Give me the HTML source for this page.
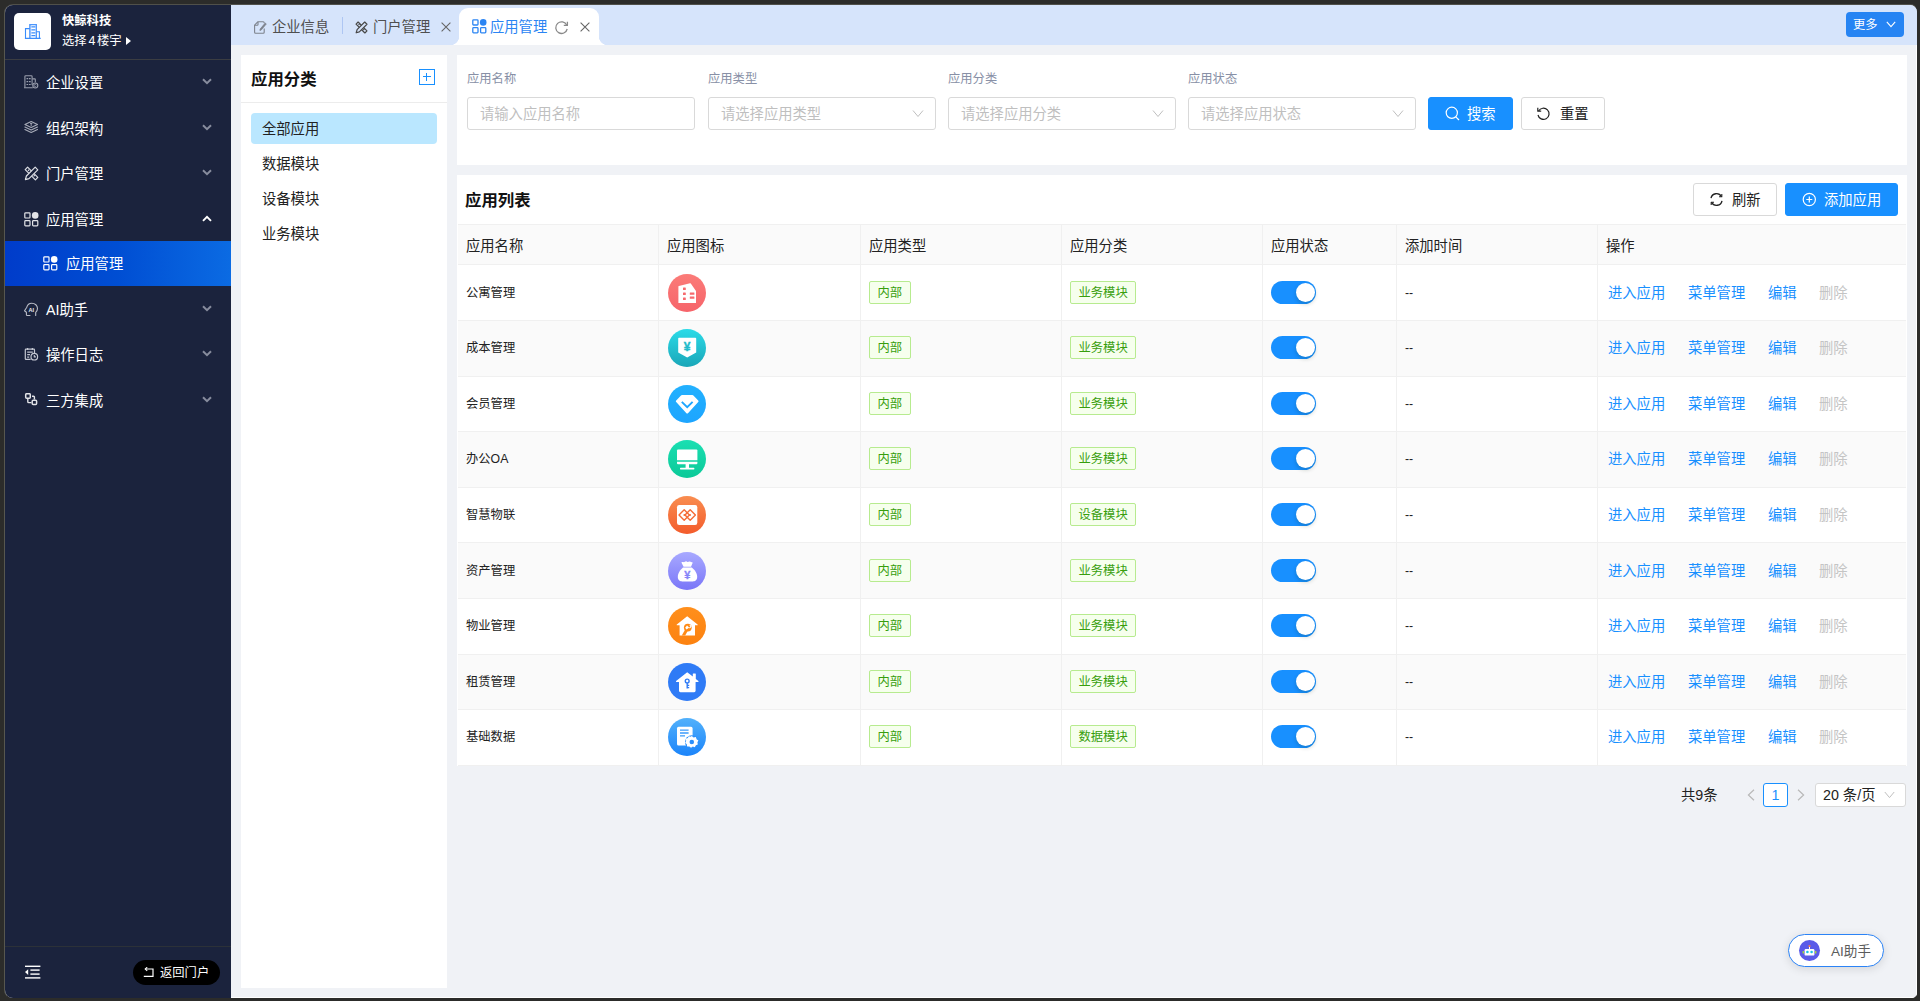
<!DOCTYPE html>
<html lang="zh-CN">
<head>
<meta charset="utf-8">
<title>应用管理</title>
<style>
*{box-sizing:border-box;margin:0;padding:0}
html,body{width:1920px;height:1001px;overflow:hidden}
body{background:#2c2c2a;font-family:"Liberation Sans","Noto Sans CJK SC",sans-serif;font-size:14.3px;color:#222;position:relative}
a{text-decoration:none;cursor:pointer}
svg{display:block}
.abs{position:absolute}
#frame{position:absolute;left:4px;top:4px;width:1914px;height:995px;border-radius:9px 8px 6px 9px;border:1px solid transparent;border-left-color:#57574f;border-top-color:#50504a}
#app{position:absolute;left:5px;top:5px;width:1912px;height:993px;border-radius:8px 7px 5px 8px;overflow:hidden;background:#f0f2f6}
#edge{position:absolute;left:226px;top:40px;width:1686px;height:953px;border-right:1px solid #fff;border-bottom:1px solid #fff;pointer-events:none}
/* sidebar */
#side{position:absolute;left:0;top:0;width:226px;height:993px;background:#1b233d;color:#fff}
#side .hd{position:absolute;left:0;top:0;width:226px;height:55px;border-bottom:1px solid #3b3d42}
#logo{position:absolute;left:9px;top:8px;width:37px;height:37px;background:#fff;border-radius:5px}
#logo svg{position:absolute;left:0;top:0}
.cn{position:absolute;left:57px;top:8px;font-size:12.3px;font-weight:bold;line-height:16px;white-space:nowrap}
.bd{position:absolute;left:57px;top:28px;font-size:12.3px;line-height:16px;white-space:nowrap;word-spacing:-1.6px}
.bd i{display:inline-block;width:0;height:0;border-left:5.8px solid #fff;border-top:4.4px solid transparent;border-bottom:4.4px solid transparent;margin-left:4.200px;vertical-align:0.500px}
.mi{position:absolute;left:0;width:226px;height:40px;line-height:40px;font-size:14.3px;color:#fff;white-space:nowrap}
.mi .ic{position:absolute;left:19px;top:13px;width:14px;height:14px;color:#a9adb9}
.mi .tx{position:absolute;left:41px;top:1px}
.mi .ar{position:absolute;left:197px;top:16px;width:10px;height:7px}
.mi.sub{height:45px;line-height:45px;background:linear-gradient(90deg,#003cca 0%,#004ed3 50%,#0b6be3 100%)}
.mi.sub .ic{left:38px;top:15px;color:#fff}
.mi.sub .tx{left:61px}
#side .ft{position:absolute;left:0;top:941px;width:226px;height:52px;border-top:1px solid #2c3138}
#side .ft .col{position:absolute;left:20px;top:18px}
#side .ft .back{position:absolute;left:128px;top:13px;width:87px;height:25px;border-radius:13px;background:#000;color:#fff;font-size:12.3px;line-height:27px;white-space:nowrap}
#side .ft .back svg{position:absolute;left:10px;top:7px}
#side .ft .back span{position:absolute;left:27px;top:0}
/* tabs */
#tabs{position:absolute;left:226px;top:0;width:1686px;height:40px;background:#d6e4fb}
.tab{position:absolute;top:0;height:40px;line-height:44px;font-size:14.3px;color:#4f4f4f;white-space:nowrap}
.tab svg{position:absolute;margin-top:1px}
#tabs .sep{position:absolute;left:111px;top:12px;width:1px;height:17px;background:#aec6f3}
#tabs .act{position:absolute;left:228px;top:3px;width:140px;height:37px;background:#fff;border-radius:9px 9px 0 0}
#tabs .act:before,#tabs .act:after{content:"";position:absolute;bottom:0;width:9px;height:9px}
#tabs .act:before{left:-9px;background:radial-gradient(circle at 0 0,transparent 9px,#fff 9.5px)}
#tabs .act:after{right:-9px;background:radial-gradient(circle at 100% 0,transparent 9px,#fff 9.5px)}
#more{position:absolute;left:1615px;top:7px;width:58px;height:25px;border-radius:4px;background:#2684f3;color:#fff;font-size:12.3px;line-height:27px}
#more span{position:absolute;left:7px;top:0}
#more svg{position:absolute;left:40px;top:9px}
/* left panel */
#cat{position:absolute;left:236px;top:50px;width:206px;height:933px;background:#fff}
#cat .tt{position:absolute;left:10px;top:12px;font-size:16.4px;font-weight:bold;line-height:24px;color:#111}
#cat .plus{position:absolute;left:178px;top:14px;width:16px;height:16px;border:1.5px solid #1890ff}
#cat .plus:before{content:"";position:absolute;left:2.5px;top:5.75px;width:8px;height:1.5px;background:#1890ff}
#cat .plus:after{content:"";position:absolute;left:5.75px;top:2.5px;width:1.5px;height:8px;background:#1890ff}
#cat .ln{position:absolute;left:0;top:47px;width:206px;height:1px;background:#ececec}
#cat .it{position:absolute;left:10px;width:186px;height:31px;line-height:33px;padding-left:11px;font-size:14.3px;color:#222;border-radius:4px}
#cat .it.on{background:#bae7ff}
/* search */
#search{position:absolute;left:452px;top:50px;width:1450px;height:110px;background:#fff}
#search label{position:absolute;top:16px;font-size:12.3px;line-height:16px;color:#8890a6}
.inp{position:absolute;top:42px;width:228px;height:33px;border:1px solid #d9d9d9;border-radius:3px;background:#fff;font-size:14.3px;line-height:33px;color:#bfbfbf;padding-left:12px;white-space:nowrap}
.inp svg{position:absolute;right:11px;top:11px}
.btn{position:absolute;height:33px;border-radius:3px;font-size:14.3px;line-height:33px;white-space:nowrap}
.btn.pri{background:#1890ff;color:#fff;border:1px solid #1890ff}
.btn.def{background:#fff;color:#222;border:1px solid #d9d9d9}
.btn svg{position:absolute}
.btn span{position:absolute;top:0}
/* table */
#list{position:absolute;left:452px;top:170px;width:1450px;height:591px;background:#fff}
#list .tt{position:absolute;left:8px;top:13px;font-size:16.4px;font-weight:bold;line-height:24px;color:#111}
.th{position:absolute;left:1px;top:49px;width:1448px;height:41px;background:#fafafa;border-top:1px solid #f0f0f0;border-bottom:1px solid #f0f0f0}
.th div{position:absolute;top:0;height:39px;line-height:43px;font-size:14.3px;color:#222;padding-left:8px;border-right:1px solid #f0f0f0}
.tr{position:absolute;left:1px;width:1448px;border-bottom:1px solid #f0f0f0;background:#fff}
.tr.odd{background:#fafafa}
.td{position:absolute;top:0;height:100%;border-right:1px solid #f0f0f0}
.c1{left:0;width:201px}.c2{left:201px;width:202px}.c3{left:403px;width:201px}.c4{left:604px;width:201px}.c5{left:805px;width:134px}.c6{left:939px;width:201px}.c7{left:1140px;width:308px;border-right:0!important}
.nm{position:absolute;left:8px;top:var(--c);margin-top:-10px;font-size:12.3px;line-height:20px;color:#222;white-space:nowrap}
.appic{position:absolute;left:9px;top:var(--c);margin-top:-19px;width:38px;height:38px;border-radius:50%;overflow:hidden}
.tag{position:absolute;left:8px;top:var(--c);margin-top:-12px;height:23px;line-height:22px;padding:0 7.5px;font-size:12.3px;color:#389e0d;background:#f6ffed;border:1px solid #b7eb8f;border-radius:2px;white-space:nowrap}
.sw{position:absolute;left:8px;top:var(--c);margin-top:-12px;width:45px;height:23px;border-radius:12px;background:#1890ff}
.sw i{position:absolute;left:24.500px;top:2px;width:19px;height:19px;border-radius:50%;background:#fff;box-shadow:0 2px 4px rgba(0,35,11,.2)}
.td a{position:absolute;top:var(--c);margin-top:-10px;font-size:14.3px;line-height:20px;color:#1890ff;white-space:nowrap}
.td a.dis{color:#c4c4c4}
.a1{left:10px}.a2{left:90px}.a3{left:170px}.a4{left:221px}
/* pagination */
#pg{position:absolute;left:0;top:0;font-size:14.3px;color:#222}
#pg .tot{position:absolute;left:1676px;top:778px;line-height:24px;white-space:nowrap}
#pg .p1{position:absolute;left:1758px;top:778px;width:25px;height:24px;border:1px solid #1890ff;border-radius:3px;background:#fff;color:#1890ff;text-align:center;line-height:23px}
#pg .sel{position:absolute;left:1810px;top:778px;width:91px;height:24px;border:1px solid #d9d9d9;border-radius:3px;background:#fff;line-height:22px;padding-left:7px;white-space:nowrap}
#pg svg{position:absolute}
/* ai float */
#ai{position:absolute;left:1783px;top:929px;width:96px;height:33px;border-radius:17px;border:1px solid #2b83f6;background:#fff;box-shadow:0 2px 10px rgba(0,0,0,.12);font-size:13.6px;color:#5c5c5c;line-height:33px}
#ai .rb{position:absolute;left:10px;top:5px;width:21px;height:21px;border-radius:50%;background:#5b5be8;overflow:hidden}
#ai span{position:absolute;left:42px;top:0;white-space:nowrap}
.i1{background:linear-gradient(180deg,#fb7b78,#f6646a)}
.i2{background:linear-gradient(180deg,#2bdbe8,#1aa6b8)}
.i3{background:linear-gradient(180deg,#22b1ff,#1da5ff)}
.i4{background:linear-gradient(180deg,#1adfb2,#0bc998)}
.i5{background:linear-gradient(180deg,#f98d50,#f35c2c)}
.i6{background:linear-gradient(180deg,#a8a9ff,#7a76f8)}
.i7{background:linear-gradient(180deg,#ff8f1c,#fc8210)}
.i8{background:#2f7bf6}
.i9{background:linear-gradient(180deg,#52b1fb,#1b84fa)}

</style>
</head>
<body>
<div id="frame"></div>
<div id="app">
<div id="side">
  <div class="hd">
    <div id="logo"><svg width="37" height="37" viewBox="0 0 37 37" fill="none" stroke="#3b8dfc" stroke-width="1.1"><rect x="15.200" y="11.200" width="2" height="14" fill="#b5d3fe" stroke="none"/><rect x="21.300" y="11.200" width="1.600" height="14" fill="#c5dcfe" stroke="none"/><path d="M15.800 25.300V11.600h6.600v13.700" stroke="#4d97fc"/><path d="M17.400 13.900h4M17.400 16.800h4M17.400 19.800h4M17.400 22.700h4" stroke-width="1.200"/><path d="M11.500 25.300V15.600h4.300M22.400 18.700h3v6.600"/><path d="M10.900 25.400h15.800" stroke-width="1.300"/></svg></div>
    <div class="cn">快鲸科技</div>
    <div class="bd">选择 4 楼宇<i></i></div>
  </div>
  <div class="mi" style="top:57px"><span class="ic" style="color:#9a9fae"><svg width="15" height="15" viewBox="0 0 15 15" fill="none" stroke="currentColor" stroke-width="1.100"><path d="M.9 12.600V1.500a.8.800 0 0 1 .8-.8h5.600a.8.800 0 0 1 .8.800v8.500"/><path d="M2.500 3.700h1.700M5 3.700h1.700M2.500 6.600h1.700M5 6.600h1.700M2.500 9.500h1.700M5 9.500h1.700" stroke-width="1.200"/><path d="M0 12.700h8.800"/><path d="M8.300 3.900h2.400a.6.600 0 0 1 .6.600v2.700"/><circle cx="11.300" cy="10.500" r="2.500"/><path d="M12.200 9.900a1.100 1.100 0 1 0 0 1.200" stroke-width=".9"/></svg></span><span class="tx">企业设置</span><svg class="ar" viewBox="0 0 10 7" fill="none" stroke="#878c9d" stroke-width="2"><path d="M1 1.2 5 5.2 9 1.2"/></svg></div>
  <div class="mi" style="top:103px"><span class="ic" style="color:#a6aab7"><svg width="15" height="15" viewBox="0 0 15 15" fill="none" stroke="currentColor" stroke-width="1.100" stroke-linejoin="round" stroke-linecap="round"><path d="M7.200.5 13.500 3.500 7.200 6.500.9 3.500Z"/><path d="M.9 6 7.200 9 13.500 6"/><path d="M.9 8.500 7.200 11.500 13.500 8.500"/><path d="M7.200 2.400v2.200M6.400 2.600h1.600" stroke-width=".9"/></svg></span><span class="tx">组织架构</span><svg class="ar" viewBox="0 0 10 7" fill="none" stroke="#878c9d" stroke-width="2"><path d="M1 1.2 5 5.2 9 1.2"/></svg></div>
  <div class="mi" style="top:148px"><span class="ic" style="color:#dcdee4"><svg width="15" height="15" viewBox="0 0 15 15" fill="none" stroke="currentColor" stroke-width="1.2" stroke-linejoin="round"><path d="M1.2 3.6 3.6 1.2 13.8 11.4 11.4 13.8Z"/><path d="M11.2 1.2 13.8 3.8 5 12.6 1.4 13.6 2.4 10Z" fill="#1b233d"/><path d="M4 4.8 5.2 3.6M9.6 10.4l1.2-1.2"/></svg></span><span class="tx">门户管理</span><svg class="ar" viewBox="0 0 10 7" fill="none" stroke="#878c9d" stroke-width="2"><path d="M1 1.2 5 5.2 9 1.2"/></svg></div>
  <div class="mi" style="top:194px"><span class="ic" style="color:#e3e4e8"><svg width="15" height="15" viewBox="0 0 15 15" fill="none" stroke="currentColor" stroke-width="1.2"><rect x=".8" y=".8" width="5.2" height="5.2" rx=".8"/><rect x=".8" y="8.6" width="5.2" height="5.2" rx=".8"/><rect x="8.6" y="8.6" width="5.2" height="5.2" rx=".8"/><circle cx="11.2" cy="3.4" r="3.3" fill="currentColor" stroke="none"/></svg></span><span class="tx">应用管理</span><svg class="ar" viewBox="0 0 10 7" fill="none" stroke="#ffffff" stroke-width="1.9"><path d="M1 5.8 5 1.8 9 5.8"/></svg></div>
  <div class="mi sub" style="top:236px"><span class="ic"><svg width="15" height="15" viewBox="0 0 15 15" fill="none" stroke="currentColor" stroke-width="1.2"><rect x=".8" y=".8" width="5.2" height="5.2" rx=".8"/><rect x=".8" y="8.6" width="5.2" height="5.2" rx=".8"/><rect x="8.6" y="8.6" width="5.2" height="5.2" rx=".8"/><circle cx="11.2" cy="3.4" r="3.3" fill="currentColor" stroke="none"/></svg></span><span class="tx">应用管理</span></div>
  <div class="mi" style="top:284px"><span class="ic" style="color:#b9bcc7"><svg width="15" height="15" viewBox="0 0 15 15" fill="none" stroke="currentColor" stroke-width="1.100" stroke-linejoin="round" stroke-linecap="round"><path d="M6 13.500H3.200a.8.800 0 0 1-.8-.8V10.200L.5 8.700 2.800 5.200C3.400 2.800 5.200 1.200 7.800 1.200 11 1.200 13.500 3.500 13.500 6.500c0 1.600-.7 2.800-1.800 3.800v3.200"/><text x="4.400" y="9.700" font-family="Liberation Sans,sans-serif" font-size="5.600" font-weight="bold" fill="#e8e9ee" stroke="none">AI</text></svg></span><span class="tx">AI助手</span><svg class="ar" viewBox="0 0 10 7" fill="none" stroke="#878c9d" stroke-width="2"><path d="M1 1.2 5 5.2 9 1.2"/></svg></div>
  <div class="mi" style="top:329px"><span class="ic" style="color:#c3c6d1"><svg width="15" height="15" viewBox="0 0 15 15" fill="none" stroke="currentColor" stroke-width="1.200"><path d="M6.600 12.400H2a.7.700 0 0 1-.7-.7V2.900a.7.700 0 0 1 .7-.7h7.800a.7.700 0 0 1 .7.700v3"/><path d="M3.600.9v2M8.400.9v2" stroke-width="1.300"/><path d="M3.200 5.100h5.600M3.200 7.700h2.800M3.200 10.100h2" /><circle cx="10.300" cy="9.700" r="3.300"/><path d="M10.300 7.900v2h1.600" stroke-width="1.100"/></svg></span><span class="tx">操作日志</span><svg class="ar" viewBox="0 0 10 7" fill="none" stroke="#878c9d" stroke-width="2"><path d="M1 1.200 5 5.200 9 1.200"/></svg></div>
  <div class="mi" style="top:375px"><span class="ic" style="color:#e2e3e8"><svg width="15" height="15" viewBox="0 0 15 15" fill="none" stroke="currentColor" stroke-width="1.500"><rect x="1.700" y=".7" width="4.600" height="4.600" rx="1"/><rect x="8.200" y="7.200" width="4.400" height="4.400" rx="1"/><path d="M3.800 6v2.800a.8.800 0 0 0 .8.800H7.400M10.400 6.500V4a.8.800 0 0 0-.8-.8H8" stroke-width="1.400"/></svg></span><span class="tx">三方集成</span><svg class="ar" viewBox="0 0 10 7" fill="none" stroke="#878c9d" stroke-width="2"><path d="M1 1.200 5 5.200 9 1.200"/></svg></div>
  <div class="ft">
    <svg class="col" width="16" height="14" viewBox="0 0 16 14" fill="#fff"><rect x="0" y=".6" width="15.400" height="1.400"/><rect x="5.400" y="4.400" width="9.200" height="1.400"/><rect x="5.400" y="8.400" width="9.200" height="1.400"/><rect x="0" y="12.200" width="15.400" height="1.400"/><path d="M0 7.100 3.200 4.300v5.600Z"/></svg>
    <div class="back"><svg width="12" height="11" viewBox="0 0 12 11" fill="none" stroke="#fff" stroke-width="1.200"><path d="M2.400 2H10v7.400H.8"/><path d="M4.200.2 2.200 2l2 1.800" stroke-width="1.100"/></svg><span>返回门户</span></div>
  </div>
</div>
<div id="tabs">
  <div class="tab" style="left:0;width:111px"><svg style="left:23px;top:15px" width="13" height="13" viewBox="0 0 13 13" fill="none" stroke="#7d828c" stroke-width="1.100" stroke-linejoin="round"><path d="M10.200 7.400v3.800a1 1 0 0 1-1 1H1.600a1 1 0 0 1-1-1V4.200L4 .700h5.200a1 1 0 0 1 1 1V2.200"/><path d="M4 .900V3.400a.8.800 0 0 1-.8.800H.8"/><path d="M12.300 2.900 7.200 9.100 5.900 9.500l.2-1.400L11.200 2Z" fill="#7d828c" stroke-width=".7"/></svg><span style="position:absolute;left:41px">企业信息</span></div>
  <div class="sep"></div>
  <div class="tab" style="left:112px;width:116px"><svg style="left:12px;top:15px" width="13" height="13" viewBox="0 0 15 15" fill="none" stroke="#4a4a4a" stroke-width="1.400" stroke-linejoin="round"><path d="M1.200 3.600 3.600 1.200 13.800 11.400 11.400 13.800Z"/><path d="M11.200 1.200 13.800 3.800 5 12.600 1.400 13.600 2.400 10Z" fill="#d6e4fb"/><path d="M4 4.800 5.200 3.600M9.600 10.400l1.200-1.200"/></svg><span style="position:absolute;left:30px">门户管理</span><svg style="left:98px;top:16px" width="10" height="10" viewBox="0 0 10 10" fill="none" stroke="#666" stroke-width="1.100"><path d="M.6.600 9.400 9.400M9.400.600.6 9.400"/></svg></div>
  <div class="act"></div>
  <div class="tab" style="left:228px;width:140px;color:#2b85f3"><svg style="left:13px;top:13px" width="15" height="15" viewBox="0 0 15 15" fill="none" stroke="#2b85f3" stroke-width="1.300"><rect x=".8" y=".8" width="5.200" height="5.200" rx=".8"/><rect x=".8" y="8.600" width="5.200" height="5.200" rx=".8"/><rect x="8.600" y="8.600" width="5.200" height="5.200" rx=".8"/><circle cx="11.200" cy="3.400" r="3.300" fill="#2b85f3" stroke="none"/></svg><span style="position:absolute;left:31px">应用管理</span><svg style="left:95px;top:14px" width="15" height="15" viewBox="0 0 15 15" fill="none" stroke="#8a8a8a" stroke-width="1.300"><path d="M12.800 5.200A5.800 5.800 0 1 0 13.200 9"/><path d="M13.400 1.800v3.600H9.800" stroke-linejoin="round"/></svg><svg style="left:121px;top:16px" width="10" height="10" viewBox="0 0 10 10" fill="none" stroke="#666" stroke-width="1.100"><path d="M.6.600 9.400 9.400M9.400.600.6 9.400"/></svg></div>
  <div id="more"><span>更多</span><svg width="10" height="7" viewBox="0 0 10 7" fill="none" stroke="#fff" stroke-width="1.100"><path d="M.8.800 5 5.600 9.200.800"/></svg></div>
</div>
<div id="cat">
  <div class="tt">应用分类</div>
  <div class="plus"></div>
  <div class="ln"></div>
  <div class="it on" style="top:58px">全部应用</div>
  <div class="it" style="top:93px">数据模块</div>
  <div class="it" style="top:128px">设备模块</div>
  <div class="it" style="top:163px">业务模块</div>
</div>
<div id="search">
  <label style="left:10px">应用名称</label>
  <label style="left:251px">应用类型</label>
  <label style="left:491px">应用分类</label>
  <label style="left:731px">应用状态</label>
  <div class="inp" style="left:10px">请输入应用名称</div>
  <div class="inp" style="left:251px">请选择应用类型<svg width="12" height="9" viewBox="0 0 12 9" fill="none" stroke="#bfbfbf" stroke-width="1"><path d="M1 1.500 6 7.500 11 1.500"/></svg></div>
  <div class="inp" style="left:491px">请选择应用分类<svg width="12" height="9" viewBox="0 0 12 9" fill="none" stroke="#bfbfbf" stroke-width="1"><path d="M1 1.500 6 7.500 11 1.500"/></svg></div>
  <div class="inp" style="left:731px">请选择应用状态<svg width="12" height="9" viewBox="0 0 12 9" fill="none" stroke="#bfbfbf" stroke-width="1"><path d="M1 1.500 6 7.500 11 1.500"/></svg></div>
  <div class="btn pri" style="left:971px;top:42px;width:85px"><svg style="left:16px;top:8px" width="15" height="15" viewBox="0 0 15 15" fill="none" stroke="#fff" stroke-width="1.200"><circle cx="6.800" cy="6.800" r="5.600"/><path d="M10.800 10.800 14 14"/></svg><span style="left:38px">搜索</span></div>
  <div class="btn def" style="left:1064px;top:42px;width:84px"><svg style="left:14px;top:8px" width="15" height="15" viewBox="0 0 15 15" fill="none" stroke="#222" stroke-width="1.200"><path d="M2.600 5A5.600 5.600 0 1 1 2 9"/><path d="M1.800 1.800v3.400h3.400" stroke-linejoin="round"/></svg><span style="left:38px">重置</span></div>
</div>
<div id="list">
  <div class="tt">应用列表</div>
  <div class="btn def" style="left:1236px;top:8px;width:84px"><svg style="left:15px;top:8px" width="15" height="15" viewBox="0 0 15 15" fill="none" stroke="#222" stroke-width="1.300"><path d="M2 6.200A5.600 5.600 0 0 1 12.400 4.600M13 8.800A5.600 5.600 0 0 1 2.600 10.400"/><path d="M12.800 2v2.800H10M2.200 13v-2.800H5" stroke-linejoin="round" stroke-width="1.100"/></svg><span style="left:38px">刷新</span></div>
  <div class="btn pri" style="left:1328px;top:8px;width:113px"><svg style="left:16px;top:8px" width="15" height="15" viewBox="0 0 15 15" fill="none" stroke="#fff" stroke-width="1.200"><circle cx="7.300" cy="7.500" r="6.100"/><path d="M7.300 4.500v6M4.300 7.500h6"/></svg><span style="left:38px">添加应用</span></div>
  <div class="th"><div style="left:0;width:201px">应用名称</div><div style="left:201px;width:202px">应用图标</div><div style="left:403px;width:201px">应用类型</div><div style="left:604px;width:201px">应用分类</div><div style="left:805px;width:134px">应用状态</div><div style="left:939px;width:201px">添加时间</div><div style="left:1140px;width:308px;border-right:0">操作</div></div>
<div class="tr" style="top:90px;height:56px;--c:28px"><div class="td c1"><span class="nm">公寓管理</span></div><div class="td c2"><span class="appic i1"><svg width="38" height="38" viewBox="0 0 38 38"><path d="M10.400 29V12.600a.6.600 0 0 1 .5-.6L22 9.300a.7.700 0 0 1 .8.300L28 17v12Z" fill="#fff"/><g fill="#f66a6e"><rect x="15" y="13.600" width="2.800" height="2.500" rx=".4"/><rect x="15" y="18.600" width="2.800" height="2.500" rx=".4"/><rect x="15" y="23.600" width="2.800" height="2.500" rx=".4"/><rect x="21.800" y="18.400" width="4.600" height="2.400" rx=".4"/><rect x="21.800" y="22.400" width="4.600" height="2.400" rx=".4"/></g></svg></span></div><div class="td c3"><span class="tag">内部</span></div><div class="td c4"><span class="tag">业务模块</span></div><div class="td c5"><span class="sw"><i></i></span></div><div class="td c6"><span class="nm">--</span></div><div class="td c7"><a class="a1">进入应用</a><a class="a2">菜单管理</a><a class="a3">编辑</a><a class="a4 dis">删除</a></div></div>
<div class="tr odd" style="top:146px;height:56px;--c:27px"><div class="td c1"><span class="nm">成本管理</span></div><div class="td c2"><span class="appic i2"><svg width="38" height="38" viewBox="0 0 38 38"><path d="M10.200 9.600a.8.800 0 0 1 .8-.8h16.400a.8.800 0 0 1 .8.800V23.600L19.200 28.600 10.200 23.600Z" fill="#fff"/><text x="19.200" y="22.400" text-anchor="middle" font-family="Liberation Sans,sans-serif" font-size="12" font-weight="bold" fill="#22bccb" stroke="#22bccb" stroke-width=".4">¥</text></svg></span></div><div class="td c3"><span class="tag">内部</span></div><div class="td c4"><span class="tag">业务模块</span></div><div class="td c5"><span class="sw"><i></i></span></div><div class="td c6"><span class="nm">--</span></div><div class="td c7"><a class="a1">进入应用</a><a class="a2">菜单管理</a><a class="a3">编辑</a><a class="a4 dis">删除</a></div></div>
<div class="tr" style="top:202px;height:55px;--c:27px"><div class="td c1"><span class="nm">会员管理</span></div><div class="td c2"><span class="appic i3"><svg width="38" height="38" viewBox="0 0 38 38"><path d="M14 10h10.400a1.400 1.400 0 0 1 1 .4l4.800 5a1.200 1.200 0 0 1 0 1.700L20.200 28a1.300 1.300 0 0 1-2 0L8.200 17.100a1.200 1.200 0 0 1 0-1.700l4.800-5a1.400 1.400 0 0 1 1-.4Z" fill="#fff"/><path d="M13.800 16.800 19.200 22.200 24.600 16.800" fill="none" stroke="#1ea6ff" stroke-width="1.900"/></svg></span></div><div class="td c3"><span class="tag">内部</span></div><div class="td c4"><span class="tag">业务模块</span></div><div class="td c5"><span class="sw"><i></i></span></div><div class="td c6"><span class="nm">--</span></div><div class="td c7"><a class="a1">进入应用</a><a class="a2">菜单管理</a><a class="a3">编辑</a><a class="a4 dis">删除</a></div></div>
<div class="tr odd" style="top:257px;height:56px;--c:27px"><div class="td c1"><span class="nm">办公OA</span></div><div class="td c2"><span class="appic i4"><svg width="38" height="38" viewBox="0 0 38 38" fill="#fff"><path d="M9 10.600a1 1 0 0 1 1-1h18.400a1 1 0 0 1 1 1V20.200H9Z"/><path d="M9 21.800H29.400v1.400a1 1 0 0 1-1 1H10a1 1 0 0 1-1-1Z"/><rect x="17.600" y="24" width="3.400" height="4"/><rect x="12" y="27.800" width="14.400" height="1.600" rx=".6"/></svg></span></div><div class="td c3"><span class="tag">内部</span></div><div class="td c4"><span class="tag">业务模块</span></div><div class="td c5"><span class="sw"><i></i></span></div><div class="td c6"><span class="nm">--</span></div><div class="td c7"><a class="a1">进入应用</a><a class="a2">菜单管理</a><a class="a3">编辑</a><a class="a4 dis">删除</a></div></div>
<div class="tr" style="top:313px;height:55px;--c:27px"><div class="td c1"><span class="nm">智慧物联</span></div><div class="td c2"><span class="appic i5"><svg width="38" height="38" viewBox="0 0 38 38"><rect x="9" y="9.100" width="20.300" height="19.800" rx="2.200" fill="#fff"/><g fill="none" stroke="#f56b36" stroke-width="1.400" stroke-linejoin="round"><path d="M16.200 13.800 21.400 19 16.200 24.200 11 19Z"/><path d="M22.200 13.800 27.400 19 22.200 24.200 17 19Z"/></g><circle cx="16.400" cy="19" r="1" fill="#f56b36"/><circle cx="22" cy="19" r="1" fill="#f56b36"/></svg></span></div><div class="td c3"><span class="tag">内部</span></div><div class="td c4"><span class="tag">设备模块</span></div><div class="td c5"><span class="sw"><i></i></span></div><div class="td c6"><span class="nm">--</span></div><div class="td c7"><a class="a1">进入应用</a><a class="a2">菜单管理</a><a class="a3">编辑</a><a class="a4 dis">删除</a></div></div>
<div class="tr odd" style="top:368px;height:56px;--c:28px"><div class="td c1"><span class="nm">资产管理</span></div><div class="td c2"><span class="appic i6"><svg width="38" height="38" viewBox="0 0 38 38"><path d="M13.400 10.600c1.200-1.400 2.400.2 3.400-.8 1-1 1.800-.6 2.400 0 .8.800 1.800-.8 3.200 0 1 .6 2 .6 2.400.8L23 14.800H15.600Z" fill="#fff"/><path d="M15 15.600h8.800c3 2.200 5.400 6 5.400 9.400 0 3.200-2.200 4.400-4.400 4.400H14.200c-2.200 0-4.400-1.200-4.400-4.400 0-3.400 2.400-7.200 5.200-9.400Z" fill="#fff"/><text x="19.400" y="27.400" text-anchor="middle" font-family="Liberation Sans,sans-serif" font-size="11" font-weight="bold" fill="#8684f9" stroke="#8684f9" stroke-width=".3">¥</text></svg></span></div><div class="td c3"><span class="tag">内部</span></div><div class="td c4"><span class="tag">业务模块</span></div><div class="td c5"><span class="sw"><i></i></span></div><div class="td c6"><span class="nm">--</span></div><div class="td c7"><a class="a1">进入应用</a><a class="a2">菜单管理</a><a class="a3">编辑</a><a class="a4 dis">删除</a></div></div>
<div class="tr" style="top:424px;height:56px;--c:27px"><div class="td c1"><span class="nm">物业管理</span></div><div class="td c2"><span class="appic i7"><svg width="38" height="38" viewBox="0 0 38 38"><path d="M19.200 9.200 29.600 17.600a.4.400 0 0 1-.2.700H27V28.400H11.600V18.300H9a.4.400 0 0 1-.2-.7Z" fill="#fff"/><circle cx="19.800" cy="20.600" r="3.900" fill="#ff8a14"/><path d="M17.200 22.600 13.800 28.600h3.400l2.600-4.800Z" fill="#ff8a14"/><path d="M19 18.400 21.200 20.600 18.600 22.600 17.200 20.800Z" fill="#fff"/><path d="M21.800 17.800 23 19.600 21.400 21.200" fill="none" stroke="#fff" stroke-width="1.100"/></svg></span></div><div class="td c3"><span class="tag">内部</span></div><div class="td c4"><span class="tag">业务模块</span></div><div class="td c5"><span class="sw"><i></i></span></div><div class="td c6"><span class="nm">--</span></div><div class="td c7"><a class="a1">进入应用</a><a class="a2">菜单管理</a><a class="a3">编辑</a><a class="a4 dis">删除</a></div></div>
<div class="tr odd" style="top:480px;height:55px;--c:27px"><div class="td c1"><span class="nm">租赁管理</span></div><div class="td c2"><span class="appic i8"><svg width="38" height="38" viewBox="0 0 38 38"><path d="M19.200 9.200 24.800 13.600V11a.5.500 0 0 1 .5-.5h2a.5.500 0 0 1 .5.500v5l2.600 2a.5.500 0 0 1-.3.900H27.600V27.800a1.400 1.400 0 0 1-1.400 1.400H12.400A1.400 1.400 0 0 1 11 27.800V18.900H8.400a.5.500 0 0 1-.3-.9Z" fill="#fff"/><circle cx="19.200" cy="18" r="1.900" fill="none" stroke="#2f7bf6" stroke-width="1.400"/><path d="M19.200 20v5.400M19.200 22.400h2M19.200 24.600h2" fill="none" stroke="#2f7bf6" stroke-width="1.400"/></svg></span></div><div class="td c3"><span class="tag">内部</span></div><div class="td c4"><span class="tag">业务模块</span></div><div class="td c5"><span class="sw"><i></i></span></div><div class="td c6"><span class="nm">--</span></div><div class="td c7"><a class="a1">进入应用</a><a class="a2">菜单管理</a><a class="a3">编辑</a><a class="a4 dis">删除</a></div></div>
<div class="tr" style="top:535px;height:56px;--c:27px"><div class="td c1"><span class="nm">基础数据</span></div><div class="td c2"><span class="appic i9"><svg width="38" height="38" viewBox="0 0 38 38"><rect x="9" y="8.800" width="15.600" height="18.800" rx="1.600" fill="#fff"/><path d="M12 12.200h8.600M12 15h8.600M12 17.800h5" stroke="#3b9bfb" stroke-width="1.300" fill="none"/><circle cx="23.800" cy="24" r="6.800" fill="#2d90fb"/><path d="M23.800 17.900 25.600 19.400 27.900 19 28.600 21.200 30.400 22.600 29.400 24.200 29.800 26.400 27.900 27.200 26.800 29.200 24.800 28.600 23 29.800 21.400 28.400 19.200 28.400 18.800 26.200 17.200 24.800 18.200 23 17.800 20.800 19.800 20 20.800 18.200 22.600 18.800Z" fill="#fff"/><circle cx="23.800" cy="24" r="2.300" fill="#2d90fb"/></svg></span></div><div class="td c3"><span class="tag">内部</span></div><div class="td c4"><span class="tag">数据模块</span></div><div class="td c5"><span class="sw"><i></i></span></div><div class="td c6"><span class="nm">--</span></div><div class="td c7"><a class="a1">进入应用</a><a class="a2">菜单管理</a><a class="a3">编辑</a><a class="a4 dis">删除</a></div></div>
</div>
<div id="pg">
  <div class="tot">共9条</div>
  <svg style="left:1742px;top:784px" width="8" height="12" viewBox="0 0 8 12" fill="none" stroke="#b8b8b8" stroke-width="1.2"><path d="M7 .8 1.400 6 7 11.200"/></svg>
  <div class="p1">1</div>
  <svg style="left:1792px;top:784px" width="8" height="12" viewBox="0 0 8 12" fill="none" stroke="#b8b8b8" stroke-width="1.2"><path d="M1 .8 6.600 6 1 11.200"/></svg>
  <div class="sel">20 条/页<svg style="right:10px;top:7px" width="11" height="8" viewBox="0 0 11 8" fill="none" stroke="#bfbfbf" stroke-width="1"><path d="M.8 1 5.500 6.600 10.200 1"/></svg></div>
</div>
<div id="edge"></div>
<div id="ai"><div class="rb"><svg width="21" height="21" viewBox="0 0 21 21"><rect x="5.600" y="9" width="9.800" height="6.600" rx="1.200" fill="#fff"/><rect x="10" y="6.600" width="1" height="2.600" fill="#fff"/><circle cx="10.500" cy="6" r="1.100" fill="#ff7a45"/><circle cx="8.400" cy="12" r="1.300" fill="#19c2e8"/><circle cx="12.600" cy="12" r="1.300" fill="#19c2e8"/><rect x="3.600" y="11" width="1.400" height="2.600" rx=".6" fill="#a6e22e"/><rect x="16" y="11" width="1.400" height="2.600" rx=".6" fill="#a6e22e"/></svg></div><span>AI助手</span></div>
</div>

</body>
</html>
